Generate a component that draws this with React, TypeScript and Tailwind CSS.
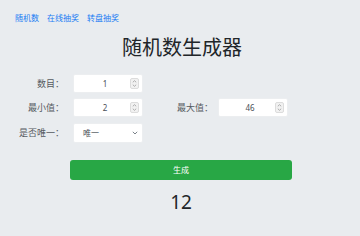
import React from 'react';

function Spinner() {
  return (
    <svg width="9" height="11" viewBox="0 0 9 11" className="shrink-0">
      <rect x="0.5" y="0.5" width="8" height="10" rx="1.5" fill="#f1f1f1" stroke="#dcdcdc" />
      <path d="M2.8 4.3 L4.5 2.7 L6.2 4.3" fill="none" stroke="#9a9a9a" strokeWidth="0.8" />
      <path d="M2.8 6.7 L4.5 8.3 L6.2 6.7" fill="none" stroke="#9a9a9a" strokeWidth="0.8" />
    </svg>
  );
}

function NumberBox({ value }: { value: string }) {
  return (
    <div className="w-[70px] h-[19px] bg-white rounded-[2px] border border-[#eceef0] flex items-center pr-[3px]">
      <span className="flex-1 text-center text-[8px] text-[#495057] pl-[6px]">{value}</span>
      <Spinner />
    </div>
  );
}

export default function App() {
  const font = { fontFamily: '"Noto Sans", "Noto Sans CJK SC", sans-serif' };
  return (
    <div className="w-[360px] h-[236px] bg-[#e9ecef] overflow-hidden" style={font}>
      <div className="flex gap-[8px] pl-[15px] pt-[12px] text-[8px] leading-[12px] text-[#1a7cf4]">
        <span>随机数</span>
        <span>在线抽奖</span>
        <span>转盘抽奖</span>
      </div>

      <h1 className="text-center text-[20px] leading-[24px] text-[#212529] mt-[12px] pl-[4px]">随机数生成器</h1>

      <div className="mt-[14px] flex flex-col gap-[5px] text-[9px] text-[#555a60]">
        <div className="flex items-center">
          <label className="w-[64px] text-right">数目：</label>
          <div className="ml-[9px]"><NumberBox value="1" /></div>
        </div>
        <div className="flex items-center">
          <label className="w-[64px] text-right">最小值：</label>
          <div className="ml-[9px]"><NumberBox value="2" /></div>
          <label className="w-[70px] text-right">最大值：</label>
          <div className="ml-[5px]"><NumberBox value="46" /></div>
        </div>
        <div className="flex items-center mt-[1px]">
          <label className="w-[64px] text-right">是否唯一：</label>
          <div className="ml-[9px] w-[70px] h-[20px] bg-white rounded-[2px] border border-[#eceef0] flex items-center pl-[9px] pr-[4px]">
            <span className="flex-1 text-[8px] text-[#495057]">唯一</span>
            <svg width="6" height="4" viewBox="0 0 6 4">
              <path d="M0.8 0.8 L3 3 L5.2 0.8" fill="none" stroke="#6c757d" strokeWidth="0.9" />
            </svg>
          </div>
        </div>
      </div>

      <div className="flex pl-[70px] mt-[17px]">
        <button className="w-[222px] h-[20px] bg-[#28a745] rounded-[3px] text-white text-[8px]">生成</button>
      </div>

      <div className="text-center text-[19px] leading-[24px] text-[#212529] mt-[10px] pl-[2px]">12</div>
    </div>
  );
}
